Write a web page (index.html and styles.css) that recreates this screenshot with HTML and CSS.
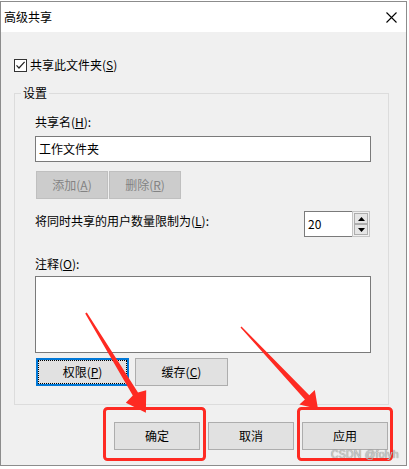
FILE: index.html
```html
<!DOCTYPE html>
<html lang="zh-CN">
<head>
<meta charset="utf-8">
<title>高级共享</title>
<link rel="stylesheet" href="styles.css">
</head>
<body>
<div class="window">
  <div class="titlebar">
    <span class="title">高级共享</span>
    <svg class="close" width="11" height="11" viewBox="0 0 11 11"><path d="M0.5 0.5 L10.5 10.5 M10.5 0.5 L0.5 10.5" stroke="#000" stroke-width="1.1" fill="none"/></svg>
  </div>
  <div class="content">
    <div class="check-row">
      <svg class="checkbox" width="13" height="13" viewBox="0 0 13 13"><rect x="0.5" y="0.5" width="12" height="12" fill="#fff" stroke="#333"/><polyline points="2.5,6.3 5,9 10.6,2.8" fill="none" stroke="#222" stroke-width="1.2"/></svg>
      <span class="check-label">共享此文件夹(<u>S</u>)</span>
    </div>
    <fieldset class="group">
      <legend class="legend">设置</legend>
      <div class="group-inner">
        <div class="label">共享名(<u>H</u>):</div>
        <div class="textbox">工作文件夹</div>
        <div class="row-small">
          <button type="button" class="btn btn-small" disabled>添加(<u>A</u>)</button>
          <button type="button" class="btn btn-small" disabled>删除(<u>R</u>)</button>
        </div>
        <div class="limit-row">
          <span class="label limit-label">将同时共享的用户数量限制为(<u>L</u>):</span>
          <div class="spinner">
            <div class="spin-input">20</div>
            <div class="spin-btns">
              <div class="spin-btn"><svg width="7" height="4" viewBox="0 0 7 4"><polygon points="3.5,0 7,4 0,4" fill="#000"/></svg></div>
              <div class="spin-btn"><svg width="7" height="4" viewBox="0 0 7 4"><polygon points="0,0 7,0 3.5,4" fill="#000"/></svg></div>
            </div>
          </div>
        </div>
        <div class="label comment-label">注释(<u>O</u>):</div>
        <div class="textarea"></div>
        <div class="row-mid">
          <button type="button" class="btn btn-mid focused">权限(<u>P</u>)</button>
          <button type="button" class="btn btn-mid">缓存(<u>C</u>)</button>
        </div>
      </div>
    </fieldset>
    <div class="footer">
      <button type="button" class="btn btn-foot">确定</button>
      <button type="button" class="btn btn-foot">取消</button>
      <button type="button" class="btn btn-foot">应用</button>
    </div>
  </div>
</div>
<svg class="annot" width="409" height="469" viewBox="0 0 409 469">
  <polygon fill="#fe2a22" points="85.2,313.4 86.8,312.4 138,392.4 146.2,390.2 145.9,412.8 125.8,402.8 132.8,395.6"/>
  <polygon fill="#fe2a22" points="240.5,327.5 241.5,326.5 309.3,395.2 314.8,390.1 318,409 299.4,404.5 304.9,399.4"/>
  <rect x="104.5" y="408.5" width="100" height="51" rx="3" fill="none" stroke="#fe2a22" stroke-width="3"/>
  <rect x="298.5" y="408.5" width="93" height="51" rx="3" fill="none" stroke="#fe2a22" stroke-width="3"/>
</svg>
<div class="watermark">CSDN @folyh</div>
</body>
</html>
```
FILE: styles.css
```css
html, body {
  margin: 0;
  padding: 0;
}
body {
  background: #ffffff;
  width: 409px;
  height: 469px;
  overflow: hidden;
  position: relative;
  font-family: "Noto Sans CJK SC", "Microsoft YaHei", sans-serif;
  font-size: 12px;
  line-height: 16px;
  color: #000;
}
u {
  text-decoration: underline;
  text-decoration-thickness: 1px;
  text-underline-offset: 1px;
}
.window {
  margin-top: 1px;
  width: 407px;
  box-sizing: border-box;
  border: 1px solid #8c8c8c;
  background: #f0f0f0;
}
.titlebar {
  height: 30px;
  background: #ffffff;
  display: flex;
  align-items: center;
  justify-content: space-between;
}
.title {
  padding-left: 3px;
}
.close {
  margin-right: 9px;
  display: block;
}
.content {
  padding: 25px 17px 15px 13px;
}
.check-row {
  display: flex;
  align-items: center;
  height: 16px;
}
.checkbox {
  display: block;
}
.check-label {
  margin-left: 3px;
}
.group {
  margin: 12px 0 0 0;
  padding: 0;
  border: 1px solid #dcdcdc;
  min-width: 0;
}
.legend {
  margin-left: 6px;
  padding: 0 2px;
  line-height: 16px;
}
.group-inner {
  padding: 13px 17px 18px 20px;
}
.label {
  height: 16px;
  white-space: nowrap;
}
.textbox {
  margin-top: 6px;
  height: 26px;
  box-sizing: border-box;
  border: 1px solid #7a7a7a;
  background: #fff;
  padding-left: 3px;
  line-height: 24px;
}
.btn {
  appearance: none;
  font: inherit;
  line-height: 16px;
  margin: 0;
  padding: 0;
  box-sizing: border-box;
  background: #e1e1e1;
  border: 1px solid #adadad;
  color: #000;
  text-align: center;
}
.btn:disabled {
  background: #cccccc;
  border-color: #bfbfbf;
  color: #838383;
}
.row-small {
  margin-top: 9px;
  margin-left: 1px;
  display: flex;
  gap: 1px;
}
.btn-small {
  width: 72px;
  height: 28px;
}
.limit-row {
  margin-top: 12px;
  display: flex;
  justify-content: space-between;
  align-items: flex-start;
}
.limit-label {
  margin-top: 2px;
}
.spinner {
  display: flex;
  height: 26px;
  margin-right: 1px;
}
.spin-input {
  width: 48px;
  box-sizing: border-box;
  border: 1px solid #7a7a7a;
  border-right: 0;
  background: #fff;
  padding-left: 3px;
  line-height: 24px;
}
.spin-btns {
  width: 18px;
  box-sizing: border-box;
  border: 1px solid #c4c4c4;
  padding: 1px;
  display: flex;
  flex-direction: column;
  background: #f0f0f0;
}
.spin-btn {
  flex: 1;
  box-sizing: border-box;
  background: #e5e5e5;
  border: 1px solid #adadad;
  display: flex;
  align-items: center;
  justify-content: center;
}
.spin-btn svg {
  display: block;
}
.comment-label {
  margin-top: 19px;
}
.textarea {
  margin-top: 4px;
  height: 77px;
  box-sizing: border-box;
  border: 1px solid #7a7a7a;
  background: #fff;
}
.row-mid {
  margin-top: 5px;
  margin-left: 1px;
  display: flex;
  gap: 6px;
}
.btn-mid {
  width: 93px;
  height: 28px;
}
.btn.focused {
  border: 2px solid #0078d7;
  outline: 1px dotted #000;
  outline-offset: -3px;
}
.footer {
  margin-top: 17px;
  margin-right: 1px;
  display: flex;
  justify-content: flex-end;
  gap: 8px;
}
.btn-foot {
  width: 86px;
  height: 28px;
}
.annot {
  position: absolute;
  left: 0;
  top: 0;
  pointer-events: none;
}
.watermark {
  position: absolute;
  left: 331px;
  top: 447px;
  font-family: "Liberation Sans", Arial, sans-serif;
  font-size: 10.5px;
  line-height: 14px;
  color: #d2d2d2;
  text-shadow: 0 0 1px #555555;
  letter-spacing: 0.2px;
}
```
